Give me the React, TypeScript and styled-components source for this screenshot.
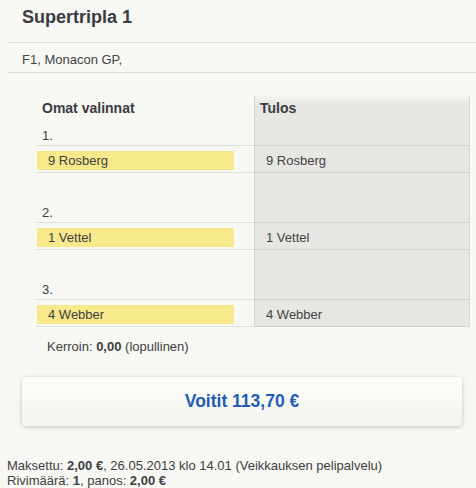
import React from "react";
import styled, { createGlobalStyle } from "styled-components";

const Global = createGlobalStyle`
  html, body { margin: 0; padding: 0; background: #f7f7f4; }
  body { font-family: "Liberation Sans", Arial, sans-serif; color: #404040; }
`;

const Page = styled.div`
  width: 476px;
  height: 488px;
  overflow: hidden;
  background: #f7f7f4;
`;

const Header = styled.div`
  margin-left: 8px;
`;

const Title = styled.h1`
  margin: 0;
  padding: 6px 0 14px 14px;
  font-size: 18px;
  line-height: 22px;
  font-weight: bold;
  color: #3a3c42;
  border-bottom: 1px solid #dededa;
`;

const Sub = styled.div`
  padding: 9px 0 5px 14px;
  font-size: 13px;
  line-height: 15px;
  color: #444;
  border-bottom: 1px solid #dededa;
`;

const Table = styled.div`
  margin: 23px 0 0 36px;
  width: 434px;
`;

const Row = styled.div<{ $h: number; $line?: boolean }>`
  display: grid;
  grid-template-columns: 218px 216px;
  height: ${(p) => p.$h + (p.$line ? 1 : 0)}px;
`;

const LeftCell = styled.div<{ $line?: boolean; $kind: "head" | "num" | "sel" | "blank" }>`
  box-sizing: border-box;
  border-bottom: ${(p) => (p.$line ? "1px solid #dededa" : "none")};
  padding-left: ${(p) => (p.$kind === "sel" ? "1px" : "6px")};
  padding-top: ${(p) => (p.$kind === "num" ? "8px" : p.$kind === "sel" ? "5px" : "0")};
  font-size: ${(p) => (p.$kind === "head" ? "14px" : "13px")};
  font-weight: ${(p) => (p.$kind === "head" ? "bold" : "normal")};
  line-height: ${(p) => (p.$kind === "head" ? "24px" : "15px")};
  color: ${(p) => (p.$kind === "head" ? "#3a3c42" : "#404040")};
`;

const RightCell = styled.div<{ $line?: boolean; $head?: boolean; $sel?: boolean }>`
  box-sizing: border-box;
  background: ${(p) =>
    p.$head ? "linear-gradient(#f5f5f2 0px, #e6e6e3 8px, #e6e6e3 100%)" : "#e6e6e3"};
  border-left: 1px solid #d4d4d0;
  border-right: 1px solid #d8d8d4;
  border-bottom: ${(p) => (p.$line ? "1px solid #d2d2ce" : "none")};
  padding-left: ${(p) => (p.$head ? "5px" : "11px")};
  padding-top: ${(p) => (p.$sel ? "5px" : "0")};
  font-size: ${(p) => (p.$head ? "14px" : "13px")};
  font-weight: ${(p) => (p.$head ? "bold" : "normal")};
  line-height: ${(p) => (p.$head ? "24px" : "19px")};
  color: ${(p) => (p.$head ? "#3a3c42" : "#444")};
`;

const Pick = styled.div`
  width: 197px;
  height: 19px;
  background: #f7e88b;
  padding-left: 11px;
  box-sizing: border-box;
  font-size: 13px;
  line-height: 19px;
  color: #404040;
`;

const Odds = styled.div`
  margin: 12px 0 0 47px;
  font-size: 13px;
  line-height: 15px;
  color: #404040;
`;

const WinBox = styled.div`
  margin: 23px 0 0 22px;
  width: 440px;
  height: 49px;
  border-radius: 4px;
  background: linear-gradient(#fefef8, #f3f3ef);
  box-shadow: 0 1px 4px rgba(0, 0, 0, 0.22);
  text-align: center;
  font-size: 17.5px;
  font-weight: bold;
  line-height: 49px;
  color: #1f5db6;
`;

const Footer = styled.div`
  margin: 32px 0 0 7px;
  font-size: 13px;
  line-height: 15px;
  color: #404040;
`;

const picks = [
  { n: "1.", mine: "9 Rosberg", res: "9 Rosberg" },
  { n: "2.", mine: "1 Vettel", res: "1 Vettel" },
  { n: "3.", mine: "4 Webber", res: "4 Webber" },
];

export default function App() {
  return (
    <Page>
      <Global />
      <Header>
        <Title>Supertripla 1</Title>
        <Sub>F1, Monacon GP,</Sub>
      </Header>
      <Table>
        {picks.map((p, i) => (
          <React.Fragment key={p.n}>
            {i === 0 ? (
              <Row $h={24}>
                <LeftCell $kind="head">Omat valinnat</LeftCell>
                <RightCell $head>Tulos</RightCell>
              </Row>
            ) : (
              <Row $h={24}>
                <LeftCell $kind="blank" />
                <RightCell />
              </Row>
            )}
            <Row $h={25} $line>
              <LeftCell $kind="num" $line>
                {p.n}
              </LeftCell>
              <RightCell $line />
            </Row>
            <Row $h={26} $line>
              <LeftCell $kind="sel" $line>
                <Pick>{p.mine}</Pick>
              </LeftCell>
              <RightCell $sel $line>
                {p.res}
              </RightCell>
            </Row>
          </React.Fragment>
        ))}
      </Table>
      <Odds>
        Kerroin: <b>0,00</b> (lopullinen)
      </Odds>
      <WinBox>Voitit 113,70 €</WinBox>
      <Footer>
        Maksettu: <b>2,00 €</b>, 26.05.2013 klo 14.01 (Veikkauksen pelipalvelu)
        <br />
        Rivimäärä: <b>1</b>, panos: <b>2,00 €</b>
      </Footer>
    </Page>
  );
}
